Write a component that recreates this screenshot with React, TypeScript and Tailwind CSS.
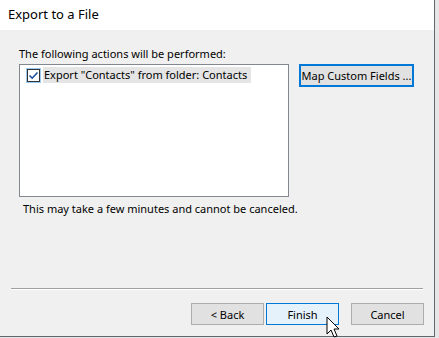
import React from "react";

const font = { fontFamily: '"Noto Sans", "Open Sans", sans-serif' };

function Cursor() {
  return (
    <svg
      className="absolute left-[326px] top-[316px]"
      width="16"
      height="24"
      viewBox="0 0 16 24"
    >
      <path
        d="M1 1 L1 18 L5 14 L8 21 L11 20 L8 13 L13 13 Z"
        fill="#ffffff"
        stroke="#000000"
        strokeWidth="1"
        strokeLinejoin="miter"
      />
    </svg>
  );
}

export default function App() {
  return (
    <div
      className="relative w-[439px] h-[338px] overflow-hidden bg-[#e6e6e6] text-[11px] text-black"
      style={font}
    >
      <div className="flex flex-col w-[435px] h-[337px] border-r border-b border-[#5f6670]">
        {/* title */}
        <div className="h-[30px] bg-white flex items-center pl-[8px] text-[13px]">
          Export to a File
        </div>

        {/* body */}
        <div className="flex-1 bg-[#f0f0f0] flex flex-col">
          <div className="pl-[19px] pt-[16px] leading-[16px]">
            The following actions will be performed:
          </div>

          <div className="flex pl-[19px] pt-[2px]">
            <div className="w-[270px] h-[133px] bg-white border border-[#828790] pt-[2px] pl-[6px]">
              <div className="flex items-center h-[16px]">
                <div className="w-[15px] h-[15px] bg-[#99c9ef] flex items-center justify-center">
                  <div className="w-[13px] h-[13px] border border-[#333333] bg-white flex items-center justify-center">
                    <svg width="11" height="11" viewBox="0 0 11 11">
                      <path
                        d="M1.5 5.5 L4.2 8.2 L9.5 2.5"
                        fill="none"
                        stroke="#1a4f9c"
                        strokeWidth="1.6"
                      />
                    </svg>
                  </div>
                </div>
                <div className="ml-[2px] h-[16px] bg-[#e5e5e5] pl-[1px] pr-[4px] leading-[16px] whitespace-nowrap">
                  Export "Contacts" from folder: Contacts
                </div>
              </div>
            </div>

            <div className="ml-[10px] w-[115px] h-[23px] border-2 border-[#0078d7] bg-[#e1e1e1] flex items-center justify-center leading-none whitespace-nowrap">
              Map Custom Fields ...
            </div>
          </div>

          <div className="pl-[23px] pt-[4px] leading-[16px]">
            This may take a few minutes and cannot be canceled.
          </div>

          <div className="mt-auto mx-[11px] border-t border-[#a0a0a0] border-b border-b-white w-[412px]" />

          <div className="flex justify-end pr-[10px] pt-[13px] pb-[11px]">
            <div className="w-[73px] h-[22px] border border-[#adadad] bg-[#e1e1e1] flex items-center justify-center leading-none">
              &lt; Back
            </div>
            <div className="ml-[2px] w-[73px] h-[22px] border border-[#0078d7] bg-[#e5f1fb] flex items-center justify-center leading-none">
              Finish
            </div>
            <div className="ml-[12px] w-[73px] h-[22px] border border-[#adadad] bg-[#e1e1e1] flex items-center justify-center leading-none">
              Cancel
            </div>
          </div>
        </div>
      </div>
      <Cursor />
    </div>
  );
}
